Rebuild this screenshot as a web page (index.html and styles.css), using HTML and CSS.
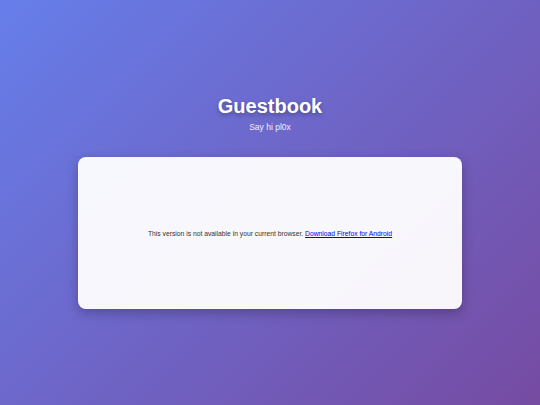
FILE: index.html
```html
<!DOCTYPE html>
<html>
<head>
<meta charset="utf-8">
<link rel="stylesheet" href="styles.css">
</head>
<body>
<div class="page">
  <header class="header">
    <h1 class="title">Guestbook</h1>
    <p class="subtitle">Say hi pl0x</p>
  </header>
  <main class="card">
    <p class="notice">This version is not available in your current browser. <a class="link" href="#">Download Firefox for Android</a></p>
  </main>
</div>
</body>
</html>
```
FILE: styles.css
```css
html, body {
  margin: 0;
  padding: 0;
  height: 100%;
}
body {
  background: linear-gradient(135deg, #667eea 0%, #764ba2 100%);
  font-family: "Liberation Sans", Arial, sans-serif;
}
.page {
  display: flex;
  flex-direction: column;
  align-items: center;
  padding-top: 95px;
}
.header {
  text-align: center;
  color: #fff;
}
.title {
  margin: 0;
  font-size: 20px;
  line-height: 23px;
  font-weight: bold;
  text-shadow: 0 2px 4px rgba(0,0,0,0.3);
}
.subtitle {
  margin: 4px 0 0;
  font-size: 8.5px;
  line-height: 10px;
  opacity: 0.9;
}
.card {
  margin-top: 25px;
  width: 384px;
  height: 152px;
  box-sizing: border-box;
  background: rgba(255,255,255,0.95);
  border-radius: 8px;
  box-shadow: 0 4px 12px rgba(0,0,0,0.25);
  display: flex;
  align-items: center;
  justify-content: center;
}
.notice {
  margin: 0;
  font-size: 6.75px;
  color: #333;
}
.link {
  color: #0000ee;
}
```
